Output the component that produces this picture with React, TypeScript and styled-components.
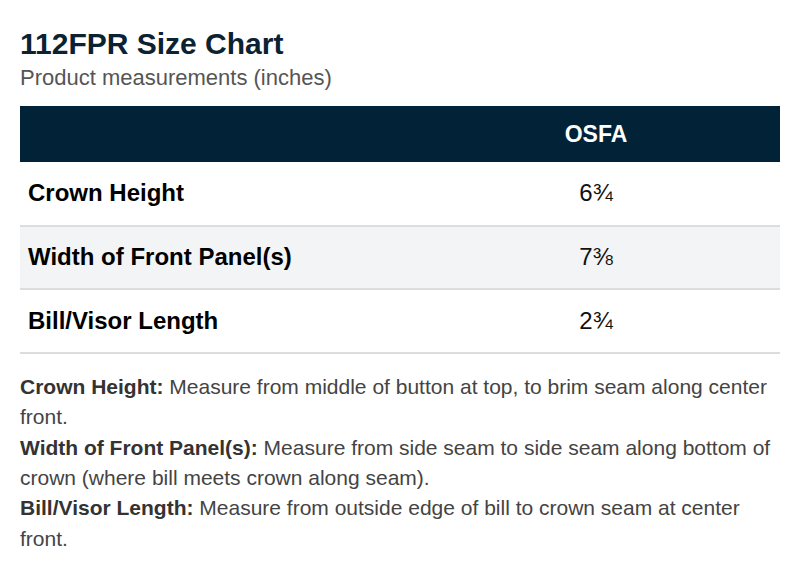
import React from "react";
import styled, { createGlobalStyle } from "styled-components";

const GlobalStyle = createGlobalStyle`
  html, body { margin: 0; padding: 0; background: #ffffff; }
  body { font-family: "Liberation Sans", Arial, sans-serif; }
`;

const Page = styled.div`
  padding: 26px 20px 20px 20px;
  font-family: "Liberation Sans", Arial, sans-serif;
`;

const Title = styled.h1`
  margin: 0;
  font-size: 30px;
  line-height: 36px;
  font-weight: 700;
  color: #0b2233;
`;

const Subtitle = styled.p`
  margin: 3px 0 0 0;
  font-size: 22px;
  line-height: 26px;
  color: #555555;
`;

const Table = styled.table`
  width: 100%;
  margin-top: 15px;
  border-collapse: collapse;
  table-layout: fixed;
`;

const HeadCell = styled.th<{ $first?: boolean }>`
  height: 56px;
  padding: 0;
  background: #022337;
  color: #ffffff;
  font-size: 23px;
  font-weight: 700;
  text-align: center;
  width: ${(p) => (p.$first ? "392px" : "auto")};
`;

const Row = styled.tr<{ $alt?: boolean }>`
  height: 63.6px;
  background: ${(p) => (p.$alt ? "#f3f4f6" : "#ffffff")};
  border-bottom: 2px solid #dddddd;
`;

const LabelCell = styled.td`
  padding: 0 0 0 8px;
  font-size: 24px;
  font-weight: 700;
  color: #000000;
`;

const ValueCell = styled.td`
  padding: 0;
  font-size: 24px;
  color: #111111;
  text-align: center;
`;

const Notes = styled.div`
  margin-top: 18px;
  font-size: 21px;
  line-height: 30.4px;
  color: #444444;
`;

const Note = styled.p`
  margin: 0;
`;

const NoteLabel = styled.strong`
  font-weight: 700;
  color: #333333;
`;

const rows = [
  { label: "Crown Height", value: "6¾" },
  { label: "Width of Front Panel(s)", value: "7⅜" },
  { label: "Bill/Visor Length", value: "2¾" },
];

const notes = [
  {
    label: "Crown Height:",
    text: " Measure from middle of button at top, to brim seam along center front.",
  },
  {
    label: "Width of Front Panel(s):",
    text: " Measure from side seam to side seam along bottom of crown (where bill meets crown along seam).",
  },
  {
    label: "Bill/Visor Length:",
    text: " Measure from outside edge of bill to crown seam at center front.",
  },
];

export default function App() {
  return (
    <>
      <GlobalStyle />
      <Page>
        <Title>112FPR Size Chart</Title>
        <Subtitle>Product measurements (inches)</Subtitle>
        <Table>
          <thead>
            <tr>
              <HeadCell $first></HeadCell>
              <HeadCell>OSFA</HeadCell>
            </tr>
          </thead>
          <tbody>
            {rows.map((r, i) => (
              <Row key={r.label} $alt={i === 1}>
                <LabelCell>{r.label}</LabelCell>
                <ValueCell>{r.value}</ValueCell>
              </Row>
            ))}
          </tbody>
        </Table>
        <Notes>
          {notes.map((n) => (
            <Note key={n.label}>
              <NoteLabel>{n.label}</NoteLabel>
              {n.text}
            </Note>
          ))}
        </Notes>
      </Page>
    </>
  );
}
